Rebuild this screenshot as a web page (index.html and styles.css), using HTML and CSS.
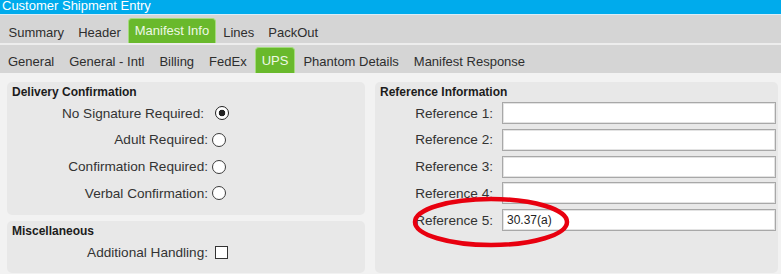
FILE: index.html
```html
<!DOCTYPE html>
<html lang="en">
<head>
<meta charset="utf-8">
<title>Customer Shipment Entry</title>
<link rel="stylesheet" href="styles.css">
</head>
<body>
<div class="app">
  <header class="titlebar">Customer Shipment Entry</header>
  <nav class="tabs tabs-main">
    <span class="tab">Summary</span>
    <span class="tab">Header</span>
    <span class="tab active">Manifest Info</span>
    <span class="tab">Lines</span>
    <span class="tab">PackOut</span>
  </nav>
  <nav class="tabs tabs-sub">
    <span class="tab">General</span>
    <span class="tab">General - Intl</span>
    <span class="tab">Billing</span>
    <span class="tab">FedEx</span>
    <span class="tab active">UPS</span>
    <span class="tab">Phantom Details</span>
    <span class="tab">Manifest Response</span>
  </nav>
  <main class="content">
    <div class="col-left">
      <section class="panel panel-delivery">
        <h2 class="panel-title">Delivery Confirmation</h2>
        <div class="opts">
          <label class="opt opt-first"><span class="lbl">No Signature Required:</span><input type="radio" name="dc" class="radio" checked></label>
          <label class="opt"><span class="lbl">Adult Required:</span><input type="radio" name="dc" class="radio"></label>
          <label class="opt"><span class="lbl">Confirmation Required:</span><input type="radio" name="dc" class="radio"></label>
          <label class="opt"><span class="lbl">Verbal Confirmation:</span><input type="radio" name="dc" class="radio"></label>
        </div>
      </section>
      <section class="panel panel-misc">
        <h2 class="panel-title">Miscellaneous</h2>
        <div class="opts">
          <label class="opt opt-check"><span class="lbl">Additional Handling:</span><input type="checkbox" class="check"></label>
        </div>
      </section>
    </div>
    <section class="panel panel-ref">
      <h2 class="panel-title">Reference Information</h2>
      <div class="refs">
        <label class="ref-lbl" for="r1">Reference 1:</label><input id="r1" class="txt" type="text" value="">
        <label class="ref-lbl" for="r2">Reference 2:</label><input id="r2" class="txt" type="text" value="">
        <label class="ref-lbl" for="r3">Reference 3:</label><input id="r3" class="txt" type="text" value="">
        <label class="ref-lbl" for="r4">Reference 4:</label><input id="r4" class="txt" type="text" value="">
        <label class="ref-lbl" for="r5">Reference 5:</label><input id="r5" class="txt" type="text" value="30.37(a)">
      </div>
    </section>
  </main>
  <svg class="annot" width="160" height="54" viewBox="0 0 160 54" aria-hidden="true">
    <ellipse cx="80" cy="27" rx="76" ry="23" fill="none" stroke="#e8000f" stroke-width="4.5"/>
  </svg>
</div>
</body>
</html>
```

FILE: styles.css
```css
html, body {
  margin: 0;
  padding: 0;
  background: #f2f2f2;
}

body {
  font-family: "Liberation Sans", Arial, sans-serif;
  color: #2e2e2e;
  overflow: hidden;
}

.app {
  position: relative;
  width: 781px;
  height: 274px;
  overflow: hidden;
}

.titlebar {
  height: 14px;
  line-height: 12px;
  padding-left: 2px;
  font-size: 13px;
  color: #ffffff;
  background: #00abec;
  border-bottom: 1px solid #dcedf7;
  overflow: hidden;
  white-space: nowrap;
}

.tabs {
  display: flex;
  align-items: flex-end;
  gap: 1px;
  height: 28px;
  padding-left: 1px;
  background: #d5d5d5;
  font-size: 13px;
  white-space: nowrap;
}

.tabs-main {
  padding-left: 2px;
  border-bottom: 2px solid #ededed;
}

.tab {
  box-sizing: border-box;
  height: 25px;
  line-height: 21px;
  padding: 4px 7px 0;
  color: #2e2e2e;
}

.tabs-main .tab {
  padding-left: 6.5px;
  padding-right: 6.5px;
}

.tabs-sub .tab {
  height: 26px;
  line-height: 22px;
}

.tab.active,
.tabs-sub .tab.active {
  padding: 0 6px;
  line-height: 24px;
  color: #eef8e6;
  background: #69b92c;
  border: 1px solid #a3dc7c;
  border-bottom: 0;
  border-radius: 4px 4px 0 0;
}

.tabs-main .tab.active {
  padding: 0 5.5px;
}

.tabs-sub .tab.active {
  line-height: 25px;
}

.content {
  box-sizing: border-box;
  display: grid;
  grid-template-columns: 358px 403px;
  column-gap: 10px;
  height: 201px;
  padding: 9px 3px 1px 7px;
}

.col-left {
  display: flex;
  flex-direction: column;
  gap: 6px;
}

.panel {
  box-sizing: border-box;
  background: #e8e8e8;
  border-radius: 5px;
  padding: 3px 2px 0 5px;
}

.panel-delivery {
  height: 133px;
}

.panel-misc {
  flex: 1;
  padding-top: 3px;
}

.panel-title {
  margin: 0;
  font-size: 12px;
  font-weight: bold;
  line-height: 14px;
  color: #1c1c1c;
}

.opts {
  display: flex;
  flex-direction: column;
  gap: 4.75px;
  margin-top: 3px;
}

.opt {
  display: flex;
  align-items: center;
  height: 22px;
  font-size: 13.6px;
  color: #333333;
}

.lbl {
  width: 196px;
  margin-right: 4px;
  text-align: right;
  white-space: nowrap;
}

.opt-first .lbl {
  padding-right: 4px;
  box-sizing: border-box;
}

.radio {
  appearance: none;
  -webkit-appearance: none;
  box-sizing: border-box;
  width: 14px;
  height: 14px;
  margin: 0;
  border: 1px solid #3c3c3c;
  border-radius: 50%;
  background: #ffffff;
}

.radio:checked {
  border: 1.6px solid #222222;
  background: radial-gradient(circle, #222222 0 3px, #ffffff 3.6px);
}

.opt-first .radio {
  margin-left: 3px;
}

.check {
  appearance: none;
  -webkit-appearance: none;
  box-sizing: border-box;
  width: 13px;
  height: 13px;
  margin: 0 0 0 3px;
  border: 1px solid #333333;
  background: #ffffff;
}

.refs {
  display: grid;
  grid-template-columns: 113px 1fr;
  column-gap: 9px;
  row-gap: 4.75px;
  grid-auto-rows: 22px;
  align-items: center;
  margin-top: 3px;
}

.ref-lbl {
  font-size: 13.6px;
  color: #333333;
  text-align: right;
  white-space: nowrap;
}

.txt {
  box-sizing: border-box;
  width: 100%;
  height: 22px;
  margin: 0;
  padding: 0 4px;
  border: 1px solid #a8a8a8;
  box-shadow: inset 0 0 0 1px #e3e3e3;
  background: #ffffff;
  font-family: "Liberation Sans", Arial, sans-serif;
  font-size: 12px;
  color: #222222;
  outline: none;
}

.annot {
  position: absolute;
  left: 411px;
  top: 195px;
  pointer-events: none;
}
```
